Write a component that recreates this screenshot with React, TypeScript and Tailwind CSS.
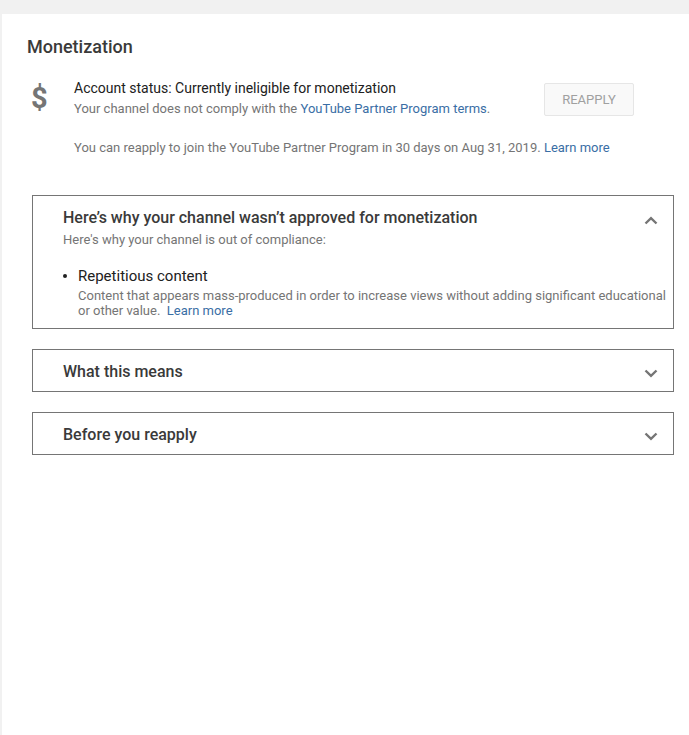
import { ReactNode } from "react";

const LINK = "text-[#3a6ea5]";

function Chevron({ up }: { up?: boolean }) {
  return (
    <svg width="14" height="9" viewBox="0 0 14 9" fill="none" className="shrink-0">
      <path
        d={up ? "M1.5 7.5L7 2.2L12.5 7.5" : "M1.5 1.5L7 6.8L12.5 1.5"}
        stroke="#757575"
        strokeWidth="2.4"
      />
    </svg>
  );
}

function Section({ title, up, children }: { title: string; up?: boolean; children?: ReactNode }) {
  return (
    <section className="border border-[#757575] pl-[30px]">
      <div className="flex items-center justify-between pr-[15px] h-[41px]">
        <h3 className="text-[16px] leading-[20px] font-medium text-[#3a3a3a] mt-[3px]">{title}</h3>
        <div className={up ? "flex items-center mt-[7px]" : "flex items-center mt-[5px]"}>
          <Chevron up={up} />
        </div>
      </div>
      {children}
    </section>
  );
}

export default function App() {
  return (
    <div className="min-h-[735px] bg-[#f1f1f1] pt-[14px] pl-[2px] font-['Roboto',sans-serif] overflow-hidden">
      <main className="bg-white min-h-[721px] pt-[23px] pl-[25px] pr-[15px]">
        <h2 className="text-[18px] leading-[20px] font-medium text-[#3a3a3a]">Monetization</h2>

        <div className="flex mt-[22px]">
          <div className="w-[47px] text-[#757575] text-[29px] leading-[32px] font-bold pl-[4px] mt-[3px]">$</div>
          <div className="w-[470px]">
            <p className="text-[14px] leading-[18px] text-[#212121]">
              Account status: Currently ineligible for monetization
            </p>
            <p className="text-[13px] leading-[18px] text-[#757575] mt-[3px]">
              Your channel does not comply with the{" "}
              <span className={LINK}>YouTube Partner Program terms</span>.
            </p>
          </div>
          <button className="w-[90px] h-[33px] mt-[4px] border border-[#e6e6e6] bg-[#f9f9f9] rounded-[2px] text-[13px] text-[#a0a0a0]">
            REAPPLY
          </button>
        </div>

        <p className="text-[13px] leading-[18px] text-[#757575] mt-[21px] ml-[47px]">
          You can reapply to join the YouTube Partner Program in 30 days on Aug 31, 2019.{" "}
          <span className={LINK}>Learn more</span>
        </p>

        <div className="flex flex-col gap-[20px] mt-[38px] ml-[5px]">
          <Section title="Here’s why your channel wasn’t approved for monetization" up>
            <div className="pb-[10px] -mt-[6px]">
              <p className="text-[13px] leading-[18px] text-[#757575]">
                Here's why your channel is out of compliance:
              </p>
              <div className="flex mt-[18px]">
                <div className="w-[15px] pt-[7px]">
                  <div className="w-[4px] h-[4px] rounded-full bg-[#212121]" />
                </div>
                <div>
                  <p className="text-[15px] leading-[18px] text-[#212121]">Repetitious content</p>
                  <p className="text-[13px] leading-[15px] text-[#757575] mt-[3px]">
                    Content that appears mass-produced in order to increase views without adding significant educational
                    <br />
                    or other value.&nbsp; <span className={LINK}>Learn more</span>
                  </p>
                </div>
              </div>
            </div>
          </Section>
          <Section title="What this means" />
          <Section title="Before you reapply" />
        </div>
      </main>
    </div>
  );
}
